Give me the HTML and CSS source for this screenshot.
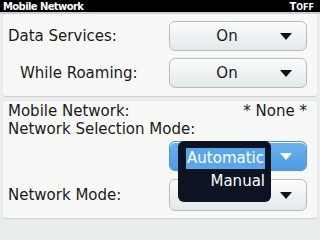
FILE: index.html
```html
<!DOCTYPE html>
<html>
<head>
<meta charset="utf-8">
<link rel="stylesheet" href="styles.css">
</head>
<body>
<div class="screen">
  <div class="titlebar">
    <span class="title">Mobile Network</span>
    <span class="status">T<small>OFF</small></span>
  </div>
  <div class="panel panel-top">
    <div class="row">
      <span class="label">Data Services:</span>
      <div class="choice"><span class="value">On</span><span class="arrow"></span></div>
    </div>
    <div class="row">
      <span class="label indent">While Roaming:</span>
      <div class="choice"><span class="value">On</span><span class="arrow"></span></div>
    </div>
  </div>
  <div class="panel panel-bottom">
    <div class="info">
      <span>Mobile Network:</span>
      <span>* None *</span>
    </div>
    <div class="info">
      <span>Network Selection Mode:</span>
    </div>
    <div class="row end">
      <div class="choice focused"><span class="value"></span><span class="arrow"></span>
        <div class="menu">
          <div class="item"><span class="sel">Automatic</span></div>
          <div class="item"><span>Manual</span></div>
        </div>
      </div>
    </div>
    <div class="row">
      <span class="label">Network Mode:</span>
      <div class="choice"><span class="value"></span><span class="arrow"></span></div>
    </div>
  </div>
</div>
</body>
</html>
```
FILE: styles.css
```css
html, body {
  margin: 0;
  padding: 0;
}
body {
  width: 320px;
  height: 240px;
  overflow: hidden;
  background: #e9eeed;
  font-family: "DejaVu Sans", sans-serif;
  color: #1a1a1a;
}
.screen {
  display: flex;
  flex-direction: column;
}
.titlebar {
  height: 12px;
  background: #000;
  color: #fff;
  display: flex;
  justify-content: space-between;
  align-items: center;
  padding: 0 6px 0 3px;
  font-weight: bold;
  font-size: 10px;
  border-bottom: 2px solid #c9d0d2;
}
.title {
  letter-spacing: -0.6px;
}
.status {
  font-size: 10px;
}
.status small {
  font-size: 8px;
}
.panel {
  margin: 0 3px;
  background: #f8f9f6;
  border-radius: 3px;
  box-shadow: 0 1px 1px rgba(0,0,0,0.12);
  display: flex;
  flex-direction: column;
  font-size: 15px;
}
.panel-top {
  padding: 7px 10px 8px 5px;
  gap: 7px;
  height: 67px;
}
.panel-bottom {
  margin-top: 5px;
  padding: 1px 10px 8px 5px;
  height: 108px;
}
.row {
  display: flex;
  justify-content: space-between;
  align-items: center;
}
.row.end {
  justify-content: flex-end;
  margin-top: 3px;
  margin-bottom: 8px;
}
.indent {
  padding-left: 12px;
}
.info {
  display: flex;
  justify-content: space-between;
  height: 18px;
  line-height: 18px;
}
.choice {
  position: relative;
  width: 136px;
  height: 28px;
  border: 1px solid #b4bcc0;
  border-radius: 6px;
  background: linear-gradient(#fbfcfc, #e3e8ea);
  display: flex;
  align-items: center;
  box-shadow: 0 1px 0 #fff inset;
}
.panel-bottom .row:last-child .choice {
  height: 30px;
}
.value {
  flex: 1;
  text-align: center;
  padding-left: 18px;
}
.arrow {
  width: 40px;
  display: flex;
  justify-content: center;
}
.arrow::before {
  content: "";
  border-left: 6px solid transparent;
  border-right: 6px solid transparent;
  border-top: 7px solid #111;
}
.focused {
  background: linear-gradient(#6bb2ee, #4f9ce2);
  border-color: #4d97d9;
  color: #fff;
}
.focused .arrow::before {
  border-top-color: #fff;
}
.menu {
  position: absolute;
  left: 8px;
  top: -1px;
  width: 79px;
  padding: 7px 6px 8px 8px;
  background: #0c1322;
  border-radius: 6px;
  color: #fff;
  z-index: 2;
}
.item {
  text-align: right;
  height: 23px;
  line-height: 21px;
}
.sel {
  background: #5ba6ea;
  padding: 0 1px;
  display: inline-block;
  line-height: 21px;
}
```
